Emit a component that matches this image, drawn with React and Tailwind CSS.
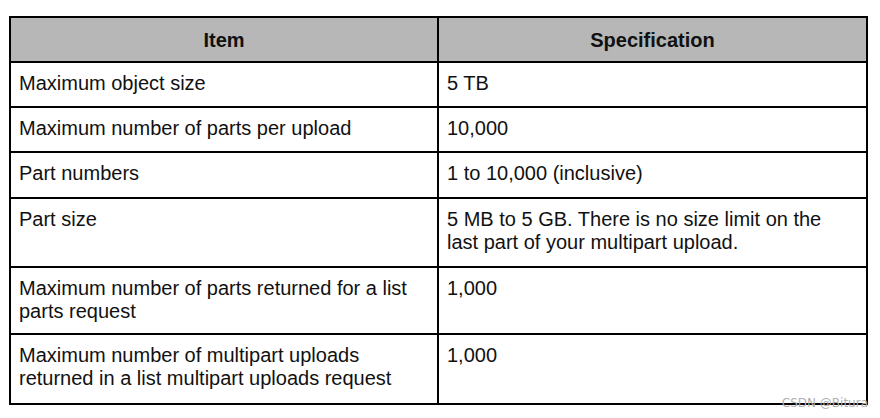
import React from 'react';

const rows = [
  { item: 'Maximum object size', spec: '5 TB', h: 'h-[45px]' },
  { item: 'Maximum number of parts per upload', spec: '10,000', h: 'h-[45px]' },
  { item: 'Part numbers', spec: '1 to 10,000 (inclusive)', h: 'h-[46px]' },
  {
    item: 'Part size',
    spec: '5 MB to 5 GB. There is no size limit on the last part of your multipart upload.',
    h: 'h-[69px]',
  },
  { item: 'Maximum number of parts returned for a list parts request', spec: '1,000', h: 'h-[67px]' },
  {
    item: 'Maximum number of multipart uploads returned in a list multipart uploads request',
    spec: '1,000',
    h: 'h-[68px]',
  },
];

const App = () => {
  return (
    <div className="relative w-[880px] h-[418px] bg-white text-[20px] leading-[23px] text-[#111] font-['Liberation_Sans',Arial,sans-serif]">
      <div className="absolute left-[9px] top-[16px] w-[859px] border-2 border-black">
        <div className="flex h-[45px] bg-[#b7b7b7] border-b-2 border-black font-bold">
          <div className="w-[428px] border-r-2 border-black flex items-center justify-center pt-[1px]">
            Item
          </div>
          <div className="flex-1 flex items-center justify-center pt-[1px]">Specification</div>
        </div>
        {rows.map((r, i) => (
          <div
            key={i}
            className={`flex ${r.h} ${i < rows.length - 1 ? 'border-b-2 border-black' : ''}`}
          >
            <div className="w-[428px] border-r-2 border-black pl-[8px] pr-[8px] pt-[9px]">{r.item}</div>
            <div className="flex-1 pl-[8px] pr-[24px] pt-[9px]">{r.spec}</div>
          </div>
        ))}
      </div>
      <div className="absolute right-[12px] top-[396px] text-[12px] leading-[14px] text-[#b0b0b0] font-['DejaVu_Sans',sans-serif]">
        CSDN @Bitura
      </div>
    </div>
  );
};

export default App;
